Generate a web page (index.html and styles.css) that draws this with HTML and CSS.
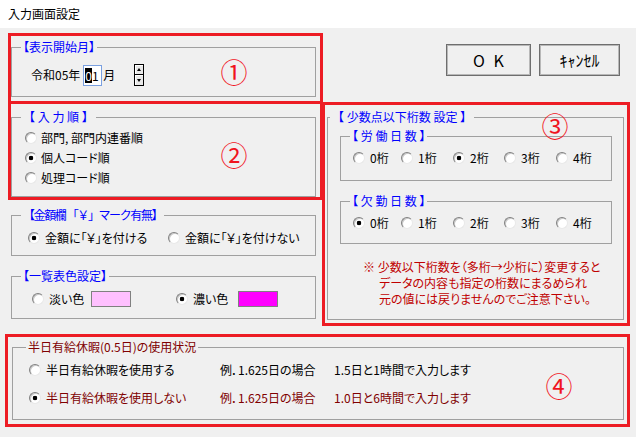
FILE: index.html
```html
<!DOCTYPE html>
<html lang="ja">
<head>
<meta charset="utf-8">
<title>入力画面設定</title>
<link rel="stylesheet" href="styles.css">
</head>
<body>
<div class="titlebar">入力画面設定</div>
<div class="main">
  <div class="top">
    <div class="leftcol">
      <div class="ann ann1">
        <fieldset class="grp g-month">
          <legend>【表示開始月】</legend>
          <div class="month-row">
            <span>令和05年</span>
            <span class="num"><span class="sel">0</span>1</span>
            <span class="tsuki">月</span>
            <span class="spin"><span class="sb"><span class="tri up"></span></span><span class="sb"><span class="tri down"></span></span></span>
          </div>
        </fieldset>
        <span class="mark">①</span>
      </div>
      <div class="ann ann2">
        <fieldset class="grp g-order">
          <legend class="wide">【 入 力 順 】</legend>
          <div class="order-rows">
            <label class="opt"><input type="radio" name="order">部門, 部門内連番順</label>
            <label class="opt"><input type="radio" name="order" checked>個人コード順</label>
            <label class="opt"><input type="radio" name="order">処理コード順</label>
          </div>
        </fieldset>
        <span class="mark">②</span>
      </div>
      <fieldset class="grp g-yen">
        <legend class="wide tight">【金額欄 「￥」マーク有無】</legend>
        <div class="yen-row">
          <label class="opt"><input type="radio" name="yen" checked>金額に「￥」を付ける</label>
          <label class="opt"><input type="radio" name="yen">金額に「￥」を付けない</label>
        </div>
      </fieldset>
      <fieldset class="grp g-color">
        <legend>【一覧表色設定】</legend>
        <div class="color-row">
          <label class="opt"><input type="radio" name="color">淡い色<span class="swatch sw-light"></span></label>
          <label class="opt"><input type="radio" name="color" checked>濃い色<span class="swatch sw-dark"></span></label>
        </div>
      </fieldset>
    </div>
    <div class="rightcol">
      <div class="buttons">
        <button class="btn ok">O K</button>
        <button class="btn cancel">ｷｬﾝｾﾙ</button>
      </div>
      <div class="ann ann3">
        <fieldset class="grp g-dec">
          <legend class="wide">【 少数点以下桁数 設定 】</legend>
          <fieldset class="grp g-sub">
            <legend>【 労 働 日 数 】</legend>
            <div class="digits">
              <label class="opt"><input type="radio" name="work">0桁</label>
              <label class="opt"><input type="radio" name="work">1桁</label>
              <label class="opt"><input type="radio" name="work" checked>2桁</label>
              <label class="opt"><input type="radio" name="work">3桁</label>
              <label class="opt"><input type="radio" name="work">4桁</label>
            </div>
          </fieldset>
          <fieldset class="grp g-sub g-sub2">
            <legend>【 欠 勤 日 数 】</legend>
            <div class="digits">
              <label class="opt"><input type="radio" name="absent" checked>0桁</label>
              <label class="opt"><input type="radio" name="absent">1桁</label>
              <label class="opt"><input type="radio" name="absent">2桁</label>
              <label class="opt"><input type="radio" name="absent">3桁</label>
              <label class="opt"><input type="radio" name="absent">4桁</label>
            </div>
          </fieldset>
          <div class="note">
            <div>※ 少数以下桁数を（多桁→少桁に）変更すると</div>
            <div class="cont">データの内容も指定の桁数にまるめられ</div>
            <div class="cont">元の値には戻りませんのでご注意下さい。</div>
          </div>
        </fieldset>
        <span class="mark">③</span>
      </div>
    </div>
  </div>
  <div class="ann ann4">
    <fieldset class="grp g-half">
      <legend>半日有給休暇(0.5日)の使用状況</legend>
      <div class="half-rows">
        <div class="half-row">
          <label class="opt"><input type="radio" name="half">半日有給休暇を使用する</label>
          <span>例．1.625日の場合</span>
          <span>1.5日と1時間で入力します</span>
        </div>
        <div class="half-row dark">
          <label class="opt"><input type="radio" name="half" checked>半日有給休暇を使用しない</label>
          <span>例．1.625日の場合</span>
          <span>1.0日と6時間で入力します</span>
        </div>
      </div>
    </fieldset>
    <span class="mark">④</span>
  </div>
</div>
</body>
</html>
```

FILE: styles.css
```css
* { box-sizing: border-box; }
html, body { margin: 0; }
body {
  width: 636px;
  height: 437px;
  overflow: hidden;
  background: #f0f0f0;
  color: #000;
  font-family: "Noto Sans CJK JP", "Noto Sans", sans-serif;
  font-size: 12px;
  line-height: 20px;
  font-feature-settings: "palt";
}
.titlebar {
  height: 28px;
  background: #fff;
  padding-left: 8px;
  line-height: 28px;
}
.main { padding-left: 8px; }
.top { display: flex; align-items: flex-start; }
.leftcol { width: 315px; display: flex; flex-direction: column; }
.rightcol { width: 308px; margin-left: -1px; display: flex; flex-direction: column; }

.ann { position: relative; border: 3px solid #ed1c24; }
.ann1 { margin-top: 5px; }
.ann2 { margin-top: -3px; }
.ann3 { margin-top: 26px; }
.ann4 { margin-top: 8px; margin-left: -3px; width: 625px; }

.mark {
  position: absolute;
  transform: translate(-50%, -50%);
  color: #f0141e;
  font-size: 27px;
  line-height: 1;
  font-feature-settings: normal;
}
.ann1 .mark { left: 223px; top: 35px; }
.ann2 .mark { left: 223px; top: 50px; }
.ann3 .mark { left: 230px; top: 20px; }
.ann4 .mark { left: 551px; top: 48px; }

.grp {
  margin: 0;
  padding: 0;
  min-width: 0;
  border: 1px solid #a0a0a0;
}
.grp > legend {
  padding: 0 2px;
  margin-left: 9px;
  line-height: 14px;
  color: #0000ff;
}
.grp > legend.wide { font-feature-settings: normal; }
.grp > legend.tight { letter-spacing: -1.4px; }

/* box 1 */
.g-month { margin: 4px 4px 4px 0; }
.month-row {
  display: flex;
  align-items: center;
  height: 22px;
  margin: 10px 0 10px 19px;
}
.num {
  width: 19px;
  height: 21px;
  margin-left: 3px;
  background: #fff;
  border: 1px solid #7aa0e0;
  display: flex;
  align-items: center;
  padding-left: 1px;
  line-height: 15px;
}
.sel { background: #000; color: #fff; }
.tsuki { margin-left: 1px; }
.spin {
  display: flex;
  flex-direction: column;
  margin-left: 19px;
  width: 10px;
}
.sb {
  height: 11px;
  border: 1px solid #000;
  background: #e8e8e8;
  box-shadow: inset 1px 1px 0 #fff;
  display: flex;
  align-items: center;
  justify-content: center;
}
.sb + .sb { margin-top: -1px; height: 12px; }
.tri { width: 0; height: 0; border-left: 2px solid transparent; border-right: 2px solid transparent; }
.tri.up { border-bottom: 3px solid #000; }
.tri.down { border-top: 3px solid #000; }

/* radios */
.opt { display: flex; align-items: center; height: 20px; white-space: nowrap; }
.opt input {
  -webkit-appearance: none;
  appearance: none;
  margin: 0 5px 0 0;
  width: 12px;
  height: 12px;
  flex: none;
  border-radius: 50%;
  border: 1px solid;
  border-color: #808080 #e8e8e8 #e8e8e8 #808080;
  background: #fff;
  box-shadow: inset 1px 1px 0 #c8c8c8;
}
.opt input:checked {
  background: radial-gradient(circle, #000 0 2px, #fff 2.6px);
}

/* box 2 */
.g-order { margin: 6px 4px 0 0; }
.order-rows { padding: 4px 0 8px 13px; }
.order-rows .opt input { margin-right: 4px; }

.g-yen { margin: 8px 7px 0 3px; }
.yen-row { display: flex; padding: 6px 0 7px 16px; }
.yen-row .opt:first-child { width: 140px; }

.g-color { margin: 13px 7px 0 3px; }
.color-row { display: flex; padding: 6px 0 9px 20px; }
.color-row .opt:first-child { width: 144px; }
.swatch { width: 40px; height: 16px; border: 1px solid #808080; }
.sw-light { background: #ffc0ff; margin-left: 7px; }
.sw-dark { background: #ff00ff; margin-left: 10px; }

/* right column */
.buttons {
  display: flex;
  justify-content: flex-end;
  gap: 8px;
  padding-right: 10px;
  margin-top: 16px;
}
.btn {
  height: 32px;
  padding: 0;
  font-family: inherit;
  font-size: 16px;
  color: #000;
  background: #f0f0f0;
  border: 1px solid #6e6e6e;
  box-shadow: inset 0 0 0 1px #b8b8b8;
}
.ok { width: 85px; word-spacing: 5px; }
.cancel { width: 81px; }

.g-dec { margin: 5px 3px 3px 2px; }
.g-dec > legend { margin-left: 2px; }
.g-sub { margin: 5px 11px 0 12px; }
.g-sub2 { margin-top: 13px; }
.digits {
  display: grid;
  grid-template-columns: 48px 52px 51px 52px auto;
  padding: 5px 0 12px 12px;
}
.g-sub2 .digits { padding-bottom: 10px; }
.note {
  color: #c00000;
  line-height: 16px;
  margin-top: 15px;
  padding: 0 0 12px 35px;
}
.note .cont { padding-left: 16px; }

/* box 4 */
.g-half { margin: 3px 3px 4px 4px; }
.g-half > legend { margin-left: 13px; color: #800000; }
.half-rows { display: grid; row-gap: 8px; padding: 6px 0 11px 16px; }
.half-row {
  display: grid;
  grid-template-columns: 191px 114px auto;
  align-items: center;
  height: 20px;
  white-space: nowrap;
}
.half-row.dark { color: #800000; }
```
